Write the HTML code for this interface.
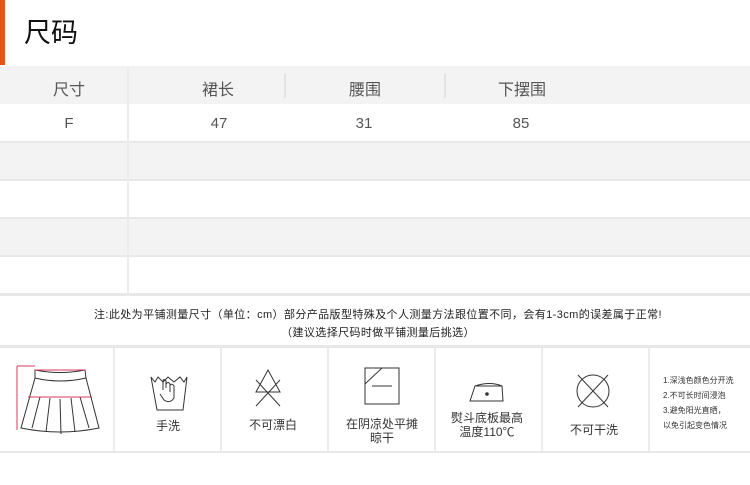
<!DOCTYPE html>
<html><head><meta charset="utf-8"><style>
*{margin:0;padding:0;box-sizing:border-box}
body{width:750px;height:485px;background:#fff;font-family:"Liberation Sans","Noto Sans CJK SC",sans-serif;color:#333;position:relative;overflow:hidden}
.a{position:absolute}
.t{position:absolute;transform:translateX(-50%);white-space:nowrap}
.hl{position:absolute;left:0;width:750px;height:2px;background:#e8e8e8}
.vl{position:absolute;width:2px;background:#ececec}
.cap{position:absolute;font-size:12px;color:#333;text-align:center;line-height:14px;white-space:nowrap;transform:translateX(-50%)}
</style></head><body>
<div class="a" style="left:0;top:0;width:5px;height:65px;background:#e8531a"></div>
<div class="a" style="left:24px;top:16px;font-size:27px;color:#111;line-height:34px">尺码</div>

<div class="a" style="left:0;top:66px;width:750px;height:38px;background:#f3f3f3"></div>
<div class="a" style="left:0;top:143px;width:750px;height:37px;background:#f3f3f3"></div>
<div class="a" style="left:0;top:219px;width:750px;height:37px;background:#f3f3f3"></div>
<div class="hl" style="top:141px"></div>
<div class="hl" style="top:179px"></div>
<div class="hl" style="top:217px"></div>
<div class="hl" style="top:255px"></div>
<div class="hl" style="top:293px;height:3px"></div>
<div class="vl" style="left:127px;top:66px;height:228px"></div>
<div class="vl" style="left:284px;top:74px;height:24px;background:#e2e2e2"></div>
<div class="vl" style="left:444px;top:74px;height:24px;background:#e2e2e2"></div>

<div class="t" style="left:69px;top:76px;font-size:16px;color:#555">尺寸</div>
<div class="t" style="left:218px;top:76px;font-size:16px;color:#555">裙长</div>
<div class="t" style="left:365px;top:76px;font-size:16px;color:#555">腰围</div>
<div class="t" style="left:522px;top:76px;font-size:16px;color:#555">下摆围</div>
<div class="t" style="left:69px;top:115px;font-size:15px;color:#555">F</div>
<div class="t" style="left:219px;top:115px;font-size:15px;color:#555">47</div>
<div class="t" style="left:364px;top:115px;font-size:15px;color:#555">31</div>
<div class="t" style="left:521px;top:115px;font-size:15px;color:#555">85</div>

<div class="t" style="left:378px;top:306px;font-size:11px;color:#222;letter-spacing:0.4px">注:此处为平铺测量尺寸（单位：cm）部分产品版型特殊及个人测量方法跟位置不同，会有1-3cm的误差属于正常!</div>
<div class="t" style="left:378px;top:324px;font-size:11px;color:#222;letter-spacing:0.4px">（建议选择尺码时做平铺测量后挑选）</div>

<div class="hl" style="top:345px;height:3px"></div>
<div class="hl" style="top:451px;height:2px"></div>
<div class="vl" style="left:113px;top:348px;height:103px"></div>
<div class="vl" style="left:220px;top:348px;height:103px"></div>
<div class="vl" style="left:327px;top:348px;height:103px"></div>
<div class="vl" style="left:434px;top:348px;height:103px"></div>
<div class="vl" style="left:541px;top:348px;height:103px"></div>
<div class="vl" style="left:648px;top:348px;height:103px"></div>

<svg class="a" style="left:0;top:348px" width="750" height="103" viewBox="0 348 750 103" fill="none" stroke="#333" stroke-width="1">
<path d="M35 370 Q60 375 85 370 L86 378 Q60 384 35 378 Z"/>
<path d="M35 378 L21 428 Q60 436 99 428 L86 378"/>
<path d="M40 397 L32 428 M50 398 L46 432 M60 399 L61 434 M71 398 L75 432 M80 397 L89 428"/>
<path stroke="#d63b5c" d="M35 370 L85 370 M28 397 L92 397 M17 366 V430 M17 366 H35"/>
<path d="M151 377 L155 382 L158 377 L163 382 L168 377 L174 382 L180 377 L184 382 L187 377 L183 410 H157 Z"/>
<path d="M163 390 V381 Q164 378 166 381 V388 M166 384 Q168 381 170 384 V392 M170 385 Q172 383 174 386 V398 Q170 404 164 400 L160 394"/>
<path d="M256 392 L268 370 L280 392 Z M256 380 L280 406 M280 380 L256 406"/>
<rect x="365" y="368" width="34" height="36"/>
<path d="M365 384 L382 368 M372 386 H392"/>
<path d="M470 401 L475 386 Q490 381 502 386 L503 401 Z M476 386 H502"/>
<circle cx="487" cy="394" r="1.3" fill="#333"/>
<circle cx="593" cy="391" r="16"/>
<path d="M578 375 L608 407 M608 375 L578 407"/>
</svg>

<div class="cap" style="left:168px;top:419px">手洗</div>
<div class="cap" style="left:273px;top:418px">不可漂白</div>
<div class="cap" style="left:382px;top:417px">在阴凉处平摊<br>晾干</div>
<div class="cap" style="left:487px;top:411px">熨斗底板最高<br>温度110℃</div>
<div class="cap" style="left:594px;top:423px">不可干洗</div>
<div class="a" style="left:663px;top:373px;font-size:8px;line-height:15px;color:#333;white-space:nowrap">1.深浅色颜色分开洗<br>2.不可长时间浸泡<br>3.避免阳光直晒，<br>以免引起变色情况</div>
</body></html>
